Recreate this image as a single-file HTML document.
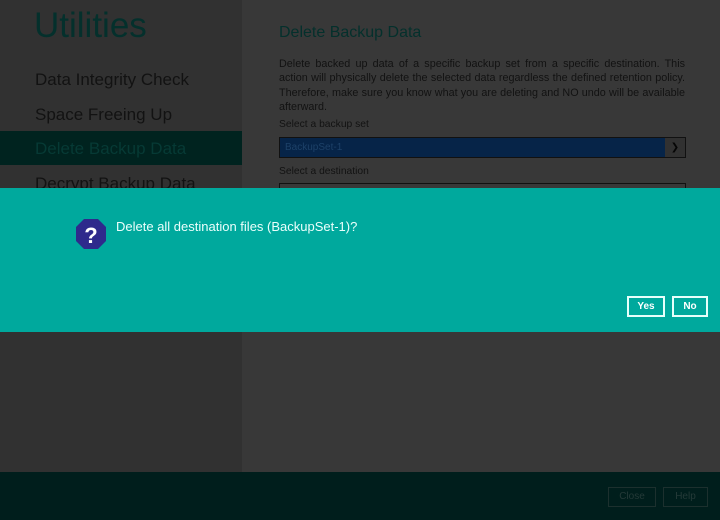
<!DOCTYPE html>
<html><head><meta charset="utf-8"><style>
*{margin:0;padding:0;box-sizing:border-box}
body{width:720px;height:520px;overflow:hidden;background:#383838;font-family:"Liberation Sans","DejaVu Sans",sans-serif;position:relative}
.side{position:absolute;left:0;top:0;width:242px;height:472px;background:#313131}
.title{position:absolute;left:34px;top:6px;font-size:35px;color:#04302c}
.item{position:absolute;left:35px;font-size:17px;color:#121212}
.sel{position:absolute;left:0;top:131px;width:242px;height:34px;background:#00231f}
.h2{position:absolute;left:279px;top:24px;font-size:16px;color:#04302c}
.p{position:absolute;left:279px;top:57px;width:406px;font-size:10.8px;line-height:14.3px;color:#121212;text-align:justify}
.lbl{position:absolute;left:279px;font-size:10.3px;color:#121212}
.selbox{position:absolute;left:279px;top:137px;width:407px;height:21px;background:#062448;border:1px solid #111}
.selbox span{position:absolute;left:5px;top:4px;font-size:10px;color:#1d4168}
.arrow{position:absolute;right:0;top:0;width:20px;height:19px;background:#313131;color:#050505;font-size:10px;text-align:center;line-height:19px}
.box2{position:absolute;left:279px;top:183px;width:407px;height:10px;border:1px solid #111}
.dlg{position:absolute;left:0;top:188px;width:720px;height:144px;background:#00a99d}
.msg{position:absolute;left:116px;top:31px;font-size:13px;color:#eafffc}
.btn{position:absolute;top:108px;height:21px;border:2px solid #e6fffb;color:#fff;font-size:10px;font-weight:bold;text-align:center;line-height:17px}
.bot{position:absolute;left:0;top:472px;width:720px;height:48px;background:#001e1c}
.b2{position:absolute;top:487px;height:20px;border:1px solid #1c302e;color:#243a38;font-size:10px;text-align:center;line-height:18px}
</style></head><body>
<div class="side"></div>
<div class="sel"></div>
<div class="title">Utilities</div>
<div class="item" style="top:70px">Data Integrity Check</div>
<div class="item" style="top:105px">Space Freeing Up</div>
<div class="item" style="top:139px;color:#063a35">Delete Backup Data</div>
<div class="item" style="top:174px">Decrypt Backup Data</div>
<div class="h2">Delete Backup Data</div>
<div class="p">Delete backed up data of a specific backup set from a specific destination. This action will physically delete the selected data regardless the defined retention policy. Therefore, make sure you know what you are deleting and NO undo will be available afterward.</div>
<div class="lbl" style="top:119px">Select a backup set</div>
<div class="selbox"><span>BackupSet-1</span><div class="arrow">&#10095;</div></div>
<div class="lbl" style="top:166px">Select a destination</div>
<div class="box2"></div>
<div class="dlg">
<svg style="position:absolute;left:75px;top:30px" width="32" height="32" viewBox="0 0 32 32"><polygon points="9,1 23,1 31,9 31,23 23,31 9,31 1,23 1,9" fill="#2e2a8c"/><text x="16" y="25" font-size="22" font-weight="bold" fill="#fff" text-anchor="middle" font-family="Liberation Sans">?</text></svg>
<div class="msg">Delete all destination files (BackupSet-1)?</div>
<div class="btn" style="left:627px;width:38px">Yes</div>
<div class="btn" style="left:672px;width:36px">No</div>
</div>
<div class="bot"></div>
<div class="b2" style="left:608px;width:48px">Close</div>
<div class="b2" style="left:663px;width:45px">Help</div>
</body></html>
